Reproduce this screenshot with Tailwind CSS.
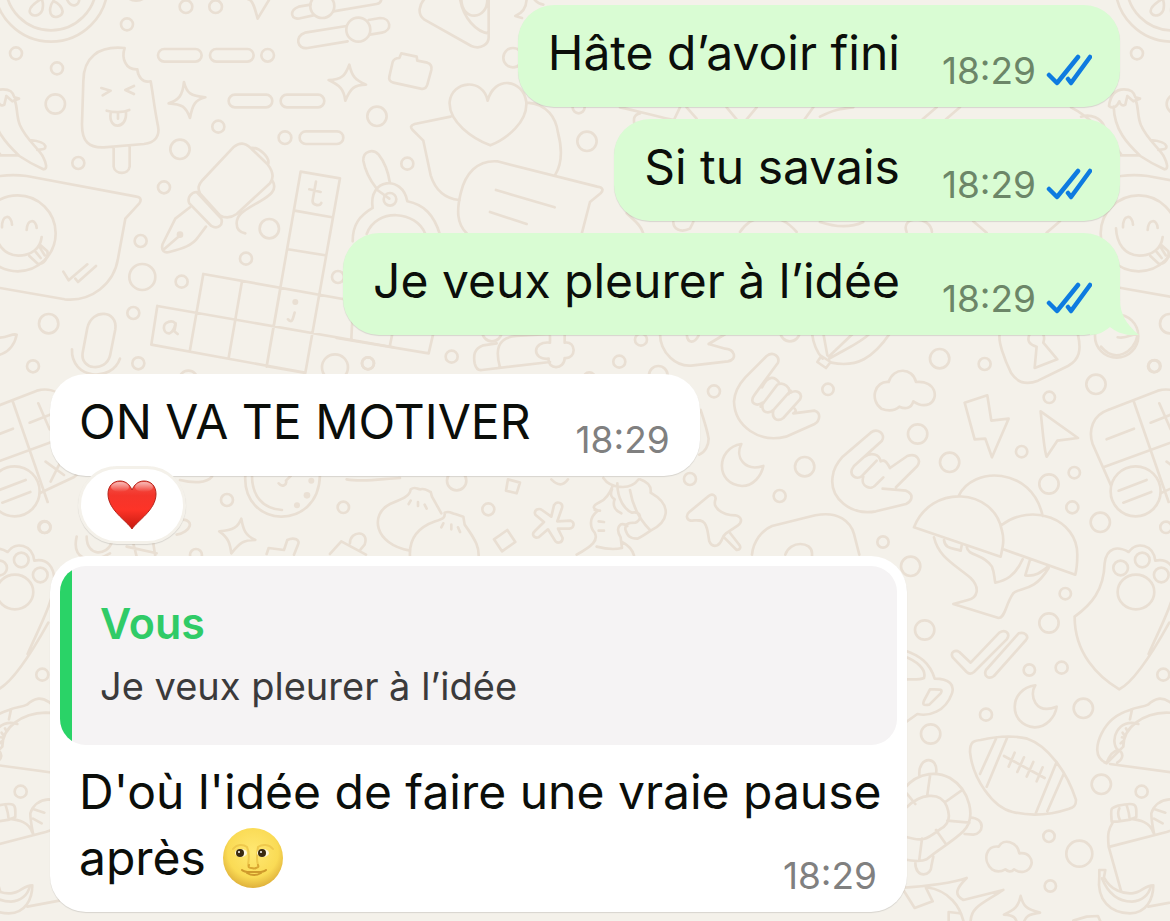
<!DOCTYPE html>
<html lang="fr">
<head>
<meta charset="utf-8">
<meta name="viewport" content="width=device-width, initial-scale=1">
<title>Discussion</title>
<script src="https://cdn.jsdelivr.net/npm/@tailwindcss/browser@4"></script>
</head>
<body class="bg-[#f4f1ea] font-['Inter','Liberation_Sans',sans-serif] text-[#0b0e0a]">
<div class="relative min-h-screen overflow-hidden">

<!-- Doodle wallpaper -->
<svg class="absolute inset-0 h-full w-full" viewBox="0 0 1170 921" preserveAspectRatio="xMinYMin slice" fill="none" stroke="#e9dfd3" stroke-width="8" stroke-linejoin="round" stroke-linecap="round" aria-hidden="true">
  <defs>
    <g id="edgeTop" transform="scale(.3333)">
      <circle cx="153" cy="-45" r="170"/><circle cx="153" cy="-45" r="136"/>
      <path d="M125-4c-25 15-40 30-35 42 8 14 30 10 37-8 3-12 2-24-2-34zM160 3c-10 12-14 34-4 44 10 8 30 3 32-12-2-14-14-26-28-32zM200-4c5 12 12 22 24 20 8-2 14-10 14-20"/>
      <circle cx="48" cy="160" r="18"/><circle cx="171" cy="205" r="18"/><circle cx="166" cy="312" r="29"/>
      <path d="M-36 318c4-32 20-50 45-50 20 0 30 6 34 24l14 4-20 8-18-16-6 26c-8 6-16 0-18-10-8 20-22 22-31 14zM-22 320c2 70 40 110 80 148 30 20 50 30 72 40 14 0 8-20 0-36-12-26-50-50-70-96-12-30-6-50-16-76M90 420c20 2 42 6 46 18 2 12-12 10-24 12M0 466h50M-150 322c60 30 100 80 150 140M-120 350c30-10 60 5 70 30"/>
      <path d="M0 528c30-4 50-4 80 0l330 62c14 2 14 12 8 20l-42 46-22 120c-12 76-80 130-160 122L0 864"/>
      <circle cx="53" cy="700" r="114"/>
      <path d="M-15 685c2 45 25 80 70 82 40 0 66-22 70-56M6 682c0-40 28-40 30-8M80 690c2-34 28-34 30-6M88 768l26 24c20 0 32-22 28-38l-22-20M104 752l18 22M118 740l16 26M190 815l16 26 56-48M226 836l8 10 54-48"/>
      <circle cx="146" cy="971" r="29"/><circle cx="99" cy="1099" r="18"/>
      <path d="M-60 1040c40 50 100 20 110-36-14-6-30 14-60 8"/>
    </g>
    <g id="edgeBottom">
      <g transform="translate(690 330) scale(.3333)">
        <path d="M1254 240l150-58c30-8 60 0 80 20l60 150c10 40 0 70-30 90l-160 75M1254 240c-45 15-60 60-46 102l62 140M1332 216l104 300M1240 412l300-110M1250 328l82-32M1382 278l76-30M1408 220l34 78M1430 395l55 40M1480 385l-35 70"/>
        <circle cx="1337" cy="484" r="75" fill="#f4f1ea"/><path d="M1286 482l84-32M1300 518l84-32"/>
        <path d="M1154 860c50-36 88-80 90-160 6-50 40-52 72-34 24-34 74-22 80 26 40-8 60 20 60 60 0 60-50 150-80 220M1154 860c0 110 70 180 134 218 40-20 100-110 150-200"/>
        <circle cx="1292" cy="714" r="22"/><circle cx="1357" cy="690" r="22"/><circle cx="1414" cy="735" r="22"/><ellipse cx="1338" cy="786" rx="55" ry="52"/>
        <circle cx="1428" cy="592" r="17"/>
      </g>
      <g transform="translate(890 600) scale(.3333)">
        <circle cx="820" cy="224" r="18"/><circle cx="755" cy="575" r="18"/>
        <path d="M650 490c-40-16-30-60-15-90 18-36 50-60 85-70 20-10 40-8 54-16 22-20 40-24 66-8 30 30 50 0 70 30M650 490c10-10 30-30 50-50 0-60 60-100 130-102 90 0 150 80 170 200l-340-46M720 358c2-10 4-20 6-28M745 372c-60-20-90 50-60 80M650 488c10-26 20-36 36-38 16 10 14 26-4 38M708 385l4 8M698 398l4 6M696 412l8 2M698 424l-6 6"/>
        <path d="M665 665c-2-40-6-40 20-48 60-14 54 0 54 34l-18 8-40 6zM688 625c-6 12-4 24 2 36M710 616c4 12 8 24 8 36M668 668c-12 20-16 30-12 72l38 136M720 656c30 4 60 10 70 42M660 740l170-44 60-20M784 640c8-26 30-40 54-42 50 0 70 30 70 60M790 626l36 12M792 656l26 14M784 640c0 20 4 40 8 60M775 920l160-30"/>
        <path fill="#f4f1ea" d="M628 810h18l-4 22c20 40 60 50 84 48 30-2 36-24 64-24 0 40-20 84-70 84-60 0-100-40-92-110z"/><path d="M636 835c20 50 50 70 90 70 30-2 50-20 56-44"/>
      </g>
    </g>
  </defs>
  <use href="#edgeTop"/><use href="#edgeTop" x="1121"/>
  <use href="#edgeBottom"/><use href="#edgeBottom" x="-1121"/>

  <g transform="scale(.3333)">
    <circle cx="381" cy="73" r="18"/><circle cx="558" cy="20" r="19"/><circle cx="647" cy="20" r="19"/><path d="M388-4c10 8 30 8 42 0M745-2c14 0 22 36 28 58l34-56"/>
    <path d="M374 144c-80-8-124 30-124 100l-4 130c0 50 20 70 66 68l120-10c34-4 48-24 42-54-12-60-14-90-22-134-24 6-38-14-40-36-36 2-48-34-38-64zM341 440v60c4 24 44 26 48 0v-64M304 264l28 8-24 14M402 258l-26 12 26 12M320 332c20 6 50 6 68-2M332 340c-8 50 50 50 46-4M354 340v16"/>
    <rect x="474" y="147" width="131" height="38" rx="19"/><rect x="630" y="147" width="131" height="38" rx="19"/><circle cx="803" cy="166" r="19"/>
    <rect x="686" y="284" width="131" height="38" rx="19"/><rect x="842" y="284" width="131" height="38" rx="19"/>
    <circle cx="855" cy="413" r="19"/><rect x="899" y="394" width="131" height="38" rx="19"/>
    <path d="M552 246c8 34 20 42 64 46-30 8-38 20-46 62-12-34-24-42-64-44 30-10 42-22 46-64zM1048 194c8 36 18 46 50 60-34 0-46 10-62 48-4-34-16-46-50-62 40 0 50-14 62-46z"/>
    <path d="M932 14l-36 6c-30 10-24 44 8 34l36-8M1000 34l130-22c12-2 14-8 14-16"/><circle cx="967" cy="18" r="36"/>
    <path d="M1040 78l-125 20c-32 10-24 52 8 46l120-20M1106 60l34-6c34 0 38 38 6 44l-36 6"/><circle cx="1075" cy="89" r="36"/>
    <circle cx="655" cy="380" r="18"/><circle cx="540" cy="448" r="29"/><circle cx="235" cy="489" r="18"/><circle cx="492" cy="562" r="18"/><circle cx="422" cy="723" r="18"/><circle cx="427" cy="831" r="39"/><circle cx="545" cy="845" r="18"/><circle cx="738" cy="776" r="18"/><circle cx="808" cy="686" r="29"/><circle cx="400" cy="939" r="18"/><circle cx="415" cy="1090" r="18"/><circle cx="1014" cy="831" r="18"/><circle cx="1131" cy="349" r="29"/><circle cx="1104" cy="1090" r="18"/><circle cx="1005" cy="1102" r="39"/><circle cx="565" cy="1140" r="28"/>
    <path d="M700 442c20-16 34-14 52 2l50 48c16 20 22 40 8 58L710 642c-14 10-32 14-50 4l-60-66c-8-16-4-26 8-40zM752 444c26-4 60 30 52 50M816 540c20 30-8 48-36 64-40 24-70 36-70 66 0 20 12 28 26 30M590 576c-14 0-30 16-22 34l66 68c20 12 36-4 30-22zM570 622l-44 34-38 76c-6 20 6 28 20 24 40-10 70-20 86-44l24-32M492 748l46-40"/><circle cx="540" cy="704" r="6" fill="#eae0d4"/>
    <path d="M902 515l118 20-104 584-116-20zM884 632l112 20M864 748l112 18M610 822l570 102M472 918l708 124M454 1034l460 84M472 918l-18 116M610 822l-40 228M726 844l-40 230M842 862l-42 238M1060 900l-6 118M948 545l-10 56c-2 16 22 18 26 8M928 568l34 8M884 938l-6 20c-4 10-10 4-14 0M505 966c-20 6-16 36 4 34 12-4 16-22 18-30M505 966c12-4 20 0 22 8l-4 20 10 8"/><circle cx="886" cy="906" r="5" fill="#eae0d4"/>
    <path d="M262 984c14-60 92-54 84 4l-16 80c-14 50-90 42-82-10zM216 1048c-4 90 120 100 144 28"/>
  </g>

  <g transform="translate(340 0) scale(.3333)">
    <path d="M256-6c-20 20-24 48-4 64l142 80c30 12 54-6 52-30V-4M360-4c10 60 50 100 86 104M364-4c0 70 80 66 78 0M560-6c0 28-14 46-34 54l20 6M580-6c8 12 16 18 30 20"/>
    <path d="M184 160l46 10 2 12 30 6c12 4 14 12 12 22l-12 44c-4 12-12 14-20 12l-82-18c-10-2-14-10-12-18l10-44c4-10 12-12 20-12z"/>
    <circle cx="519" cy="173" r="29"/><circle cx="741" cy="424" r="29"/><circle cx="202" cy="491" r="18"/><circle cx="716" cy="322" r="18"/>
    <path d="M443 302c-14-70-108-60-114 4-4 60 70 110 122 130 50-20 112-70 108-130-10-70-96-80-116-4zM332 350l-108 22c-12 4-14 10-6 18l32 32 22 104c16 50 46 70 86 74M562 308c60 4 86 46 92 90 16 60 10 96-8 126"/>
    <path d="M380 700c-30-30-30-70-18-120 14-60 50-100 110-96l300 76c16 2 20 10 10 20l-32 26-26 100M468 570l176 52M450 636l110 36"/>
    <path d="M110 566c-20-26-34-50-40-84-2-30 30-36 46-18 24 30 30 60 34 86M98 624c-14-90 90-100 104-20 50 10 80 40 98 100M98 624c-40 24-60 50-60 100M80 702c30-80 150-70 176 0M112 570l36 26"/><circle cx="150" cy="598" r="19"/>
    <path d="M900 340c-20 4-20 20-16 34M840 322c50 10 120 30 170 40M1020 322l-24 50M1040 322l30 34M1160 322l30 36M1250 322l-30 36M1420 322l-26 36M1440 350c40-20 60-24 100-28M1790 322l-42 36M1860 322l-42 36M860 640c20 20 40 30 50 60M1000 666c0 20 20 34 50 20l10-20M1200 696c40-60 120-60 170 0M1440 666c60 20 100 14 130 0M1700 696c-20-50 72-50 76 0M1900 664l40 34M2160 664l-40 34"/>
  </g>

  <g transform="translate(340 330) scale(.3333)">
    <path d="M-10 24l276 46 14-60M150 46l8-40M470 40l-40 6c-28 10-30 30-26 54 4 16 10 22 22 20l204-24M480 112c-14-50-10-90 50-94l100-6M630 18v20c-56-6-54 54-4 48-4 34 48 34 48-2 36 4 36-52 0-46V10"/>
    <circle cx="903" cy="29" r="18"/><circle cx="335" cy="80" r="18"/><circle cx="84" cy="100" r="18"/><circle cx="838" cy="95" r="18"/><circle cx="955" cy="136" r="28"/><circle cx="1122" cy="184" r="18"/><circle cx="1050" cy="447" r="18"/><circle cx="350" cy="452" r="29"/><circle cx="445" cy="538" r="18"/><circle cx="10" cy="532" r="17"/><circle cx="748" cy="145" r="18"/><circle cx="456" cy="5" r="29"/>
    <path d="M960 10c0 60 50 104 100 96l104-12c30-6 20-36-8-38l-50-14M1106 42l50-30M1040 10c2 34 24 30 36 6M1082 240c10 30 20 60 24 86 0 20-10 40-28 48"/>
    <path d="M210 662c-110-20-120-110-60-140 40-16 60-24 62-44 14-10 18 0 30 0 12-4 18 2 30 8l4 14 28 50M210 680c-4-60 30-90 76-106 24-8 30-10 28-26 16-6 20 2 32 4l24 8 4 24c36 50 44 70 42 100M212 512l-6 10M234 516v12M254 524l6 12M310 580l-6 12M334 584v14M354 592l6 14M20 448c50 10 110-2 160-4"/>
    <path d="M504 448l36 10-10 32-32-8zM462 628l40-28 24 36-40 28zM634 560l8-34c10-16 28-6 24 8l-14 40 40-2c14 6 10 22-4 24h-34l14 28c0 16-18 18-24 6l-20-32-28 24c-18 4-20-12-12-18l28-28-26-22c-6-16 12-20 20-14z"/>
    <path d="M790 444c20 30 80 40 106 4M818 468c-10 26-20 40-38 48-28 14-20 20-4 26M772 544c-26 20-22 48-8 64 12 22-6 40-54 66M770 650c30 8 60 8 76 4l-4-32M842 622c-18-30 0-50 20-34M816 478c-8 20 2 26 8 30-8 20 4 36 20 42M832 460c0 50 24 80 44 88 30-6 30 22 10 30-26 0-30 6-30 20 6 20 14 28 36 28M870 480c10 60 40 100 60 120M900 448c30 10 34 26 32 40 70 40 50 90 0 114-20 14-30 20-40 24M764 540l16 2M776 574l16 2M776 602h16M846 636c20 10 30 20 36 40M634 448c20 20 36 20 50 0"/>
    <path d="M1106 498c12-10 24 0 20 12-4 14 0 20 10 30 16 14 34 16 50 16 20 4 22 20 8 30l-36 24c-14 10-10 28-26 36-12 4-20-2-24-12-4-20-4-40-14-54-10-14-26-8-42-8-14-4-14-18-4-26zM1150 620l40 40c12 0 14-10 6-18l-28-36"/>
  </g>

  <g transform="translate(0 340) scale(.3333)">
    <path d="M736 406c-10 160 220 170 224 0M756 406c0 60 30 100 90 104M836 430c10 14 26 4 22-8l14-14M540 420c40 10 80 10 96-10M230 590c-14 60 30 90 100 50M260 590c0 60 60 60 76 16M540 538c50 0 30 40-10 46M380 620l90 20M400 610l10 40M460 610l6 40M724 536c6 34 12 50 42 64-36 0-46 8-72 40-4-30-8-46-36-66 44-2 56-14 66-38zM800 642l6-18 46 6 10-30c20-10 40 0 32 14l-12 30M990 642l34-38 74 40M1050 610c0-40 60-40 44 4l-12 14"/><circle cx="681" cy="480" r="18"/><circle cx="133" cy="561" r="18"/><circle cx="588" cy="645" r="18"/>
    <g fill="#eae0d4" stroke="none"><circle cx="934" cy="422" r="9"/><circle cx="921" cy="466" r="10"/><circle cx="891" cy="496" r="9"/></g>
  </g>

  <g transform="translate(690 330) scale(.3333)">
    <circle cx="749" cy="86" r="29"/><circle cx="884" cy="102" r="18"/><circle cx="414" cy="178" r="17"/><circle cx="683" cy="312" r="29"/><circle cx="344" cy="410" r="29"/><circle cx="779" cy="397" r="29"/><circle cx="269" cy="498" r="18"/><circle cx="579" cy="636" r="17"/><circle cx="662" cy="709" r="29"/><circle cx="995" cy="365" r="17"/><circle cx="1078" cy="202" r="17"/><circle cx="1218" cy="163" r="29"/><circle cx="1394" cy="108" r="18"/><circle cx="1153" cy="428" r="17"/><circle cx="1077" cy="462" r="29"/><circle cx="1147" cy="532" r="18"/><circle cx="1231" cy="577" r="29"/><circle cx="1126" cy="791" r="17"/><circle cx="300" cy="5" r="29"/><circle cx="1280" cy="18" r="65"/>
    <path d="M366 10c4 30 14 56 32 76M400 10l12 66M490 10l-74 70M540 10c-30 30-80 50-122 76M600 10c-50 74-100 104-176 88M394 78l28 18-14 18-26-18z"/>
    <path d="M930 10c-8 20 14 80 34 120 20 30 50 34 80 22l90-44c36-20 40-50 30-94M1020 10c-12 24 0 34 20 40l-6 64 68-26-42-50c4-12 4-20-2-28"/>
    <path d="M132 214c2-30 14-50 34-72l64-64c20-16 40 2 34 20l-70 96c-20 26 6 36 24 24M216 172c20-40 40-30 50-16M218 218c-6 34 20 34 34 20l50-56M212 230l50-66c20-10 42 10 34 28M250 242c-6 26 14 34 30 22l50-56c10-20-12-30-28-20M314 236c6 6 2 10-4 14l64-8c20 6 16 30 0 40l-86 38c-80 20-154-30-156-106"/>
    <path d="M428 440c2-24 12-40 30-60l84-72c20-16 46 4 34 24l-84 76c-20 26 6 44 24 30l44-46M524 380c20-14 44-8 48 14M520 440c-10 30 24 44 40 22l20-20M572 394c12-6 18 2 28 20l52-36c30-10 42 14 30 30l-64 64M578 476l70 6c24 10 20 30 0 40l-90 22c-76 14-140-40-130-104"/>
    <path d="M574 236c-36-26-20-84 22-80 14-46 72-44 82 0 60-6 70 50 40 66-18 8-34 2-48-8-6 22-24 24-42 16-18 16-38 12-54 6zM824 218l68-22 12 76 52-6-50 116-20-56-32 2zM1052 244l112 80-62 8-32 48c-8-20-12-80-18-136zM154 342c-20 40 10 84 66 66-6 30-30 60-64 60-80-4-80-114-2-126z"/>
    <path d="M186 674c4-40 30-74 60-86l130-32c70-14 106 20 116 56l16 62M286 674c14-44 80-40 80-4v8"/>
    <path d="M806 498c40-90 220-90 252 60M672 592c50-130 240-120 264 10 8 30 2 50-4 78zM934 586c90-70 230-20 228 90 0 24-2 42-6 58l-216-76M732 622c14 60 60 80 110 122 30 30 20 60-8 66l-44 12 136 42c20 0 20-40 44-74 20-20 60 0 106-76M762 630c4 30 30 24 50 32l4-20M830 650c4 30 50 20 76 60 8 20 6 30 10 48 30-6 60-20 82-70M1020 690l-14 46c30 4 46-8 68-26"/>
  </g>

  <g transform="translate(890 600) scale(.3333)">
    <circle cx="104" cy="90" r="29"/><circle cx="477" cy="69" r="29"/><circle cx="418" cy="210" r="17"/><circle cx="515" cy="203" r="18"/><circle cx="288" cy="344" r="18"/><circle cx="580" cy="325" r="29"/><circle cx="122" cy="402" r="29"/><circle cx="634" cy="553" r="29"/><circle cx="477" cy="709" r="17"/><circle cx="568" cy="761" r="39"/><circle cx="481" cy="858" r="17"/>
    <path d="M188 172c-8-16 8-24 20-16l34 32 86-90c20-12 34 4 22 20l-98 98c-8 6-16 6-22 0zM386 100c18-6 32 8 22 20L312 228c-16 12-32 0-24-18zM436 256c-20 30 0 90 64 64-4 30-30 62-66 62-80-6-80-116 2-126z"/>
    <path d="M240 456c0-30 10-34 32-36 60-14 100-14 140-4 60 20 120 100 146 184 0 14-4 22-20 26-60 20-120 22-170 10-60-14-120-100-128-180zM320 412l-50 110M352 412l-62 148M500 486l-62 152M522 520l-50 114M342 468l122 66M374 458l-18 42M402 472l-20 44M430 486l-20 44M458 502l-18 42"/>
    <path d="M40 150c50 16 80 40 94 86 46 0 60 20 52 44-20 56-70 70-104 62l-42 30M40 168c40 14 70 40 62 66-12 6-30 4-60 4M120 268c30 0 40-2 32 12l-34 34c-20 4-20-2-16-12zM88 526c-4-60 60-60 50-4M40 568c50-60 110-50 140-34 60 36 80 120 40 160-30 30-70 50-110 84-20 10-50 4-70 0M50 622c40-40 100-50 120-4 16 40 0 60-20 70-40 30-50 40-110 20M120 528l-8 56M214 572l-48 34M50 580l26 32M238 668l-66-6M138 690l28 40M96 716l-8 62M240 652c50 4 40 50 10 52l-26-2M76 788c0 50 50 40 48 10l6-28"/>
    <path d="M30 864c60-4 140-10 200-30-30 30-40 50-10 66l120-30c-60 40-96 50-98 92M110 862c70 10 100 60 110 100M40 870l34 54 54-20-20-40M176 962v-26l32 4M392 888c8 30 16 40 58 50-36 6-44 10-50 34M392 888c-6 30-16 40-50 56 30 2 36 8 40 30M550 962l40-12 34-2 8 18"/>
    <path d="M306 808c-30-26-18-74 20-68 14-26 56-16 62 20 30-4 40 20 36 34-8 26-36 26-52 14-8 10-20 6-26 0-14 8-28 8-40 0z"/>
  </g>
</svg>

<main class="relative flex min-h-screen flex-col px-[50px] pt-[5px] pb-[9px]" aria-label="Messages">

  <section class="flex flex-col items-end gap-3">
    <article class="flex items-end rounded-[36px] bg-[#d9fcd3] pt-[15px] pr-7 pb-4 pl-[30px] shadow-[0_1px_1px_rgba(0,0,0,0.12)]">
      <p class="pb-[5px] text-[48px] leading-[66px]">Hâte d’avoir fini</p>
      <time class="ml-[42px] text-[37px] leading-10 text-[#6c8668]">18:29</time>
      <svg class="mb-[5px] ml-[10px] h-[32px] w-[46px]" viewBox="0 0 46 32" fill="none" stroke="#0e7be0" stroke-width="4.500" stroke-linecap="round" stroke-linejoin="round" role="img" aria-label="Lu"><path d="M3 21l8 8L32 3M22 25l3 4L44 3"/></svg>
    </article>
    <article class="flex items-end rounded-[36px] bg-[#d9fcd3] pt-[15px] pr-7 pb-4 pl-[30px] shadow-[0_1px_1px_rgba(0,0,0,0.12)]">
      <p class="pb-[5px] text-[48px] leading-[66px]">Si tu savais</p>
      <time class="ml-[42px] text-[37px] leading-10 text-[#6c8668]">18:29</time>
      <svg class="mb-[5px] ml-[10px] h-[32px] w-[46px]" viewBox="0 0 46 32" fill="none" stroke="#0e7be0" stroke-width="4.500" stroke-linecap="round" stroke-linejoin="round" role="img" aria-label="Lu"><path d="M3 21l8 8L32 3M22 25l3 4L44 3"/></svg>
    </article>
    <article class="relative flex items-end rounded-[36px] bg-[#d9fcd3] pt-[15px] pr-7 pb-4 pl-[30px] shadow-[0_1px_1px_rgba(0,0,0,0.12)]">
      <svg class="absolute right-[-19px] bottom-0 h-[68px] w-[49px]" viewBox="0 0 49 68" fill="#d9fcd3" aria-hidden="true"><path d="M0 68V0h30v32c0 15 6 25 19 36-12 1-22-2-29-8-6 5-12 8-20 8z"/></svg>
      <p class="relative pb-[5px] text-[48px] leading-[66px]">Je veux pleurer à l’idée</p>
      <time class="relative ml-[42px] text-[37px] leading-10 text-[#6c8668]">18:29</time>
      <svg class="relative mb-[5px] ml-[10px] h-[32px] w-[46px]" viewBox="0 0 46 32" fill="none" stroke="#0e7be0" stroke-width="4.500" stroke-linecap="round" stroke-linejoin="round" role="img" aria-label="Lu"><path d="M3 21l8 8L32 3M22 25l3 4L44 3"/></svg>
    </article>
  </section>

  <section class="mt-[39px] flex flex-col items-start">
    <article class="relative flex items-end rounded-[36px] bg-white pt-[15px] pr-[30px] pb-4 pl-[29px] shadow-[0_1px_1px_rgba(0,0,0,0.12)]">
      <p class="pb-[5px] text-[48px] leading-[66px]">ON VA TE MOTIVER</p>
      <time class="ml-[45px] text-[37px] leading-10 text-[#808080]">18:29</time>
      <button type="button" aria-label="Réaction : cœur rouge" class="absolute top-[92px] left-7 flex h-[78px] w-[108px] items-center justify-center rounded-full border-[3px] border-[#f4f1ea] bg-white shadow-[0_1px_1px_rgba(0,0,0,0.12)]">
        <svg class="h-[50px] w-[50px]" viewBox="0 0 50 50" aria-hidden="true">
          <defs>
            <linearGradient id="heart" x1="0" y1="0" x2="0" y2="1"><stop offset="0" stop-color="#f0564c"/><stop offset=".3" stop-color="#f4352b"/><stop offset=".6" stop-color="#fd3327"/><stop offset="1" stop-color="#c51a10"/></linearGradient>
            <linearGradient id="shine" x1="0" y1="0" x2="0" y2="1"><stop offset="0" stop-color="#fff" stop-opacity=".6"/><stop offset="1" stop-color="#fff" stop-opacity="0"/></linearGradient>
          </defs>
          <path d="M25 49C20 41 1 30 1 14 1 6 6 1 13 1c6 0 10 4 12 9C27 5 31 1 37 1c7 0 12 5 12 13 0 16-19 27-24 35z" fill="url(#heart)" stroke="#b5251b" stroke-width="1"/>
          <ellipse cx="13" cy="7" rx="9" ry="5" fill="url(#shine)"/><ellipse cx="37" cy="7" rx="9" ry="5" fill="url(#shine)"/>
        </svg>
      </button>
    </article>

    <article class="mt-20 max-w-[857px] rounded-[36px] bg-white px-[10px] pt-[10px] pb-4 shadow-[0_1px_1px_rgba(0,0,0,0.12)]">
      <blockquote class="flex overflow-hidden rounded-[26px] bg-[#f5f3f4]">
        <div class="w-3 shrink-0 bg-[#2ad367]"></div>
        <div class="px-7 pt-[27px] pb-[35px]">
          <cite class="block text-[43px] leading-[60px] font-semibold text-[#30cb67] not-italic">Vous</cite>
          <p class="mt-[9px] text-[38px] leading-[48px] text-[#3b3a3b]">Je veux pleurer à l’idée</p>
        </div>
      </blockquote>
      <p class="pt-[14px] pl-[19px] text-[48px] leading-[66px]"><span>D'où l'idée de faire une vraie pause</span> <span class="whitespace-nowrap">après
        <svg class="ml-1 inline-block h-[61px] w-[61px] align-[-14px]" viewBox="0 0 61 61" role="img" aria-label="Pleine lune avec visage">
          <defs><radialGradient id="moon" cx=".5" cy=".4" r=".6"><stop offset="0" stop-color="#ffe873"/><stop offset=".7" stop-color="#fadb55"/><stop offset="1" stop-color="#dfb13b"/></radialGradient></defs>
          <circle cx="30" cy="30" r="30" fill="url(#moon)"/>
          <path d="M10 21c4-5 10-5 14-2 3 6 2 12 1 18M35 37c-2-6-1-12 0-18 4-3 11-3 15 2" fill="none" stroke="#efc94c" stroke-width="2" stroke-linecap="round"/>
          <path d="M26 37c-1 2 0 3 2 3s3 1 5 0 3-1 2-3" fill="none" stroke="#d9a632" stroke-width="2" stroke-linecap="round"/>
          <ellipse cx="18" cy="25" rx="6" ry="4" fill="#fff8dc"/><ellipse cx="40" cy="25" rx="6" ry="4" fill="#fff8dc"/>
          <circle cx="17" cy="25" r="4" fill="#3a2a10"/><circle cx="39" cy="25" r="4" fill="#3a2a10"/><circle cx="16" cy="24" r="1" fill="#fff"/><circle cx="38" cy="24" r="1" fill="#fff"/>
          <path d="M19 42c3 3 7 2 12 2s9 1 12-2M24 45c5 3 9 3 14 0" fill="none" stroke="#cf9a2c" stroke-width="2" stroke-linecap="round"/>
        </svg></span><time class="float-right mt-[31px] mr-5 text-[37px] leading-10 text-[#808080]">18:29</time></p>
    </article>
  </section>
</main>
</div>
</body>
</html>
